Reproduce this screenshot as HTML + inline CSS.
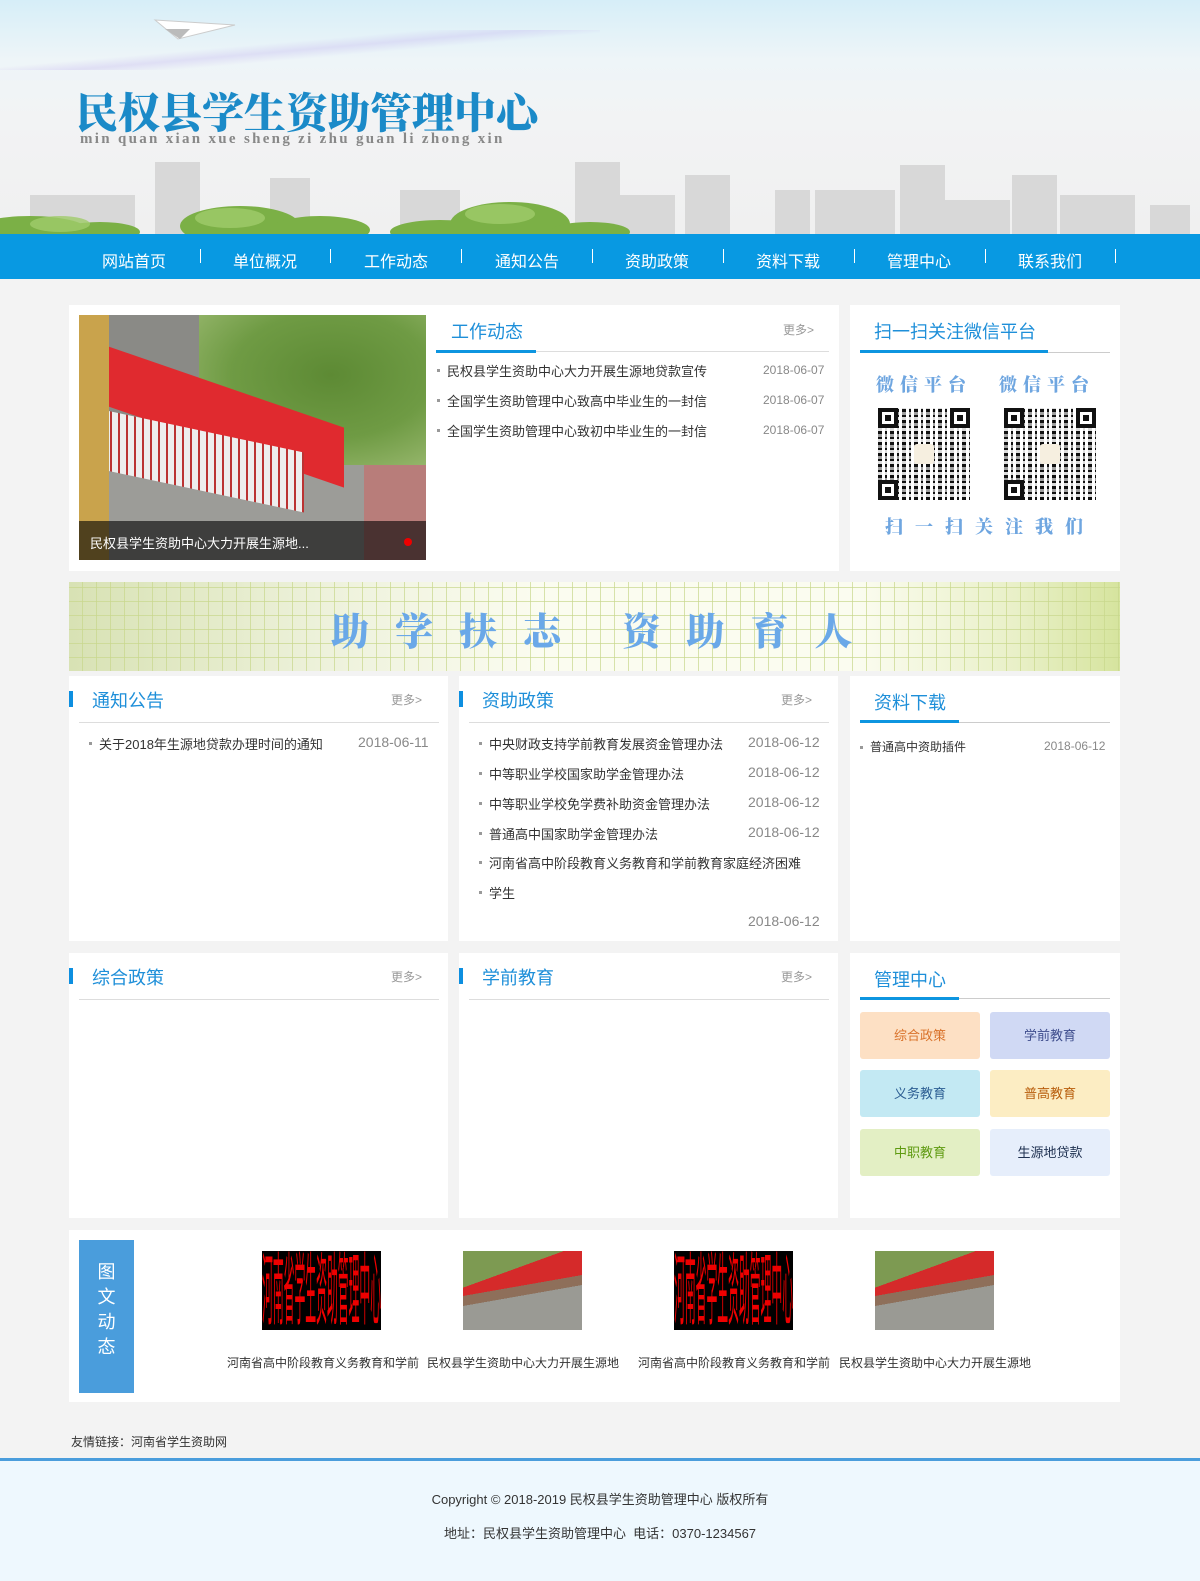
<!DOCTYPE html>
<html><head><meta charset="utf-8"><style>
*{margin:0;padding:0;box-sizing:border-box}
body{width:1200px;height:1581px;background:#f3f3f3;font-family:"Liberation Sans","Noto Sans CJK SC",sans-serif;position:relative;overflow:hidden;color:#333}
.a{position:absolute}
.box{position:absolute;background:#fff}
.hd{position:absolute;font-size:18px;color:#1e8fd9}
.more{position:absolute;font-size:12px;color:#999}
.line{position:absolute;height:1px;background:#ddd}
.uline{position:absolute;height:3px;background:#0d95e0}
.bar{position:absolute;width:4px;height:16px;background:#0d8fe0}
.li{position:absolute;font-size:13px;color:#333;white-space:nowrap}
.li:before{content:"";position:absolute;left:-10px;top:8px;width:3px;height:3px;background:#999}
.dt{position:absolute;font-size:12px;color:#888}
.dt2{position:absolute;font-size:14px;color:#888}
.nav a{position:absolute;top:248px;color:#fff;font-size:16px;text-decoration:none}
.sep{position:absolute;top:249px;width:1px;height:14px;background:#fff}
.btn{position:absolute;width:120px;height:47px;border-radius:3px;font-size:13px;text-align:center;line-height:47px}
.qr{position:absolute;width:92px;height:92px;background:
repeating-linear-gradient(90deg,#111 0 4px,#fff 4px 7px,#111 7px 9px,#fff 9px 12px),#fff}
.qr i{position:absolute;width:20px;height:20px;border:4px solid #111;background:#fff}
.qr i:after{content:"";position:absolute;left:3px;top:3px;width:6px;height:6px;background:#111}
.qr b{position:absolute;left:36px;top:36px;width:20px;height:20px;background:#f6efe0;border-radius:3px}
.qr s{position:absolute;inset:0;background:repeating-linear-gradient(0deg,transparent 0 3px,rgba(255,255,255,.85) 3px 6px,transparent 6px 8px,rgba(255,255,255,.6) 8px 11px)}
.th{position:absolute;width:119px;height:79px;overflow:hidden}
.red{background:#000}
.red span{position:absolute;left:0;top:0;color:#e00;font-size:79px;line-height:79px;white-space:nowrap;transform:scaleX(.137);transform-origin:left top}
.photo{background:linear-gradient(160deg,#7d9a52 0 30%,transparent 30%),linear-gradient(170deg,#d52a2a 0 45%,#8e6f5a 45% 55%,#9a9a94 55%)}
.cap{position:absolute;font-size:12px;color:#333;white-space:nowrap}
</style></head><body>
<!-- header -->
<div class="a" style="left:0;top:0;width:1200px;height:234px;background:linear-gradient(180deg,#d6eef8 0,#eef5f8 60px,#f2f3f4 120px,#f0f0f0 234px)"></div>
<div class="a" style="left:0;top:30px;width:600px;height:40px;background:linear-gradient(175deg,transparent 40%,rgba(200,190,240,.4) 50%,transparent 60%)"></div>
<svg class="a" style="left:150px;top:15px" width="90" height="30"><polygon points="5,5 85,10 28,24" fill="#fff" stroke="#ccc"/><polygon points="15,14 30,24 40,14" fill="#bbb"/></svg>
<div class="a" style="left:76px;top:90px;font-family:'Noto Serif CJK SC',serif;font-weight:900;font-size:42px;line-height:42px;color:#1b8ac8;white-space:nowrap">民权县学生资助管理中心</div>
<div class="a" style="left:80px;top:132px;font-family:'Liberation Serif',serif;font-weight:bold;font-size:15px;line-height:15px;color:#888;letter-spacing:2.3px;white-space:nowrap">min quan xian xue sheng zi zhu guan li zhong xin</div>
<svg class="a" style="left:0;top:150px" width="1200" height="84">
<g fill="#d8d8d8"><rect x="30" y="45" width="40" height="39"/><rect x="70" y="45" width="65" height="39"/><rect x="155" y="12" width="45" height="72"/><rect x="270" y="28" width="40" height="56"/><rect x="400" y="40" width="60" height="44"/><rect x="575" y="12" width="45" height="72"/><rect x="620" y="45" width="55" height="39"/><rect x="685" y="25" width="45" height="59"/><rect x="775" y="40" width="35" height="44"/><rect x="815" y="40" width="80" height="44"/><rect x="900" y="15" width="45" height="69"/><rect x="945" y="50" width="65" height="34"/><rect x="1012" y="25" width="45" height="59"/><rect x="1060" y="45" width="75" height="39"/><rect x="1150" y="55" width="40" height="29"/></g>
<g fill="#7bb046"><ellipse cx="30" cy="82" rx="60" ry="16"/><ellipse cx="100" cy="82" rx="40" ry="10"/><ellipse cx="240" cy="76" rx="60" ry="20"/><ellipse cx="320" cy="80" rx="50" ry="14"/><ellipse cx="440" cy="82" rx="50" ry="12"/><ellipse cx="510" cy="74" rx="60" ry="22"/><ellipse cx="590" cy="82" rx="40" ry="10"/></g>
<g fill="#a0cc6a" opacity=".8"><ellipse cx="230" cy="68" rx="35" ry="10"/><ellipse cx="500" cy="64" rx="35" ry="10"/><ellipse cx="60" cy="74" rx="30" ry="8"/></g>
</svg>
<!-- nav -->
<div class="a" style="left:0;top:234px;width:1200px;height:45px;background:#0899e2"></div>
<div class="nav">
<a style="left:102px">网站首页</a><a style="left:233px">单位概况</a><a style="left:364px">工作动态</a><a style="left:495px">通知公告</a><a style="left:625px">资助政策</a><a style="left:756px">资料下载</a><a style="left:887px">管理中心</a><a style="left:1018px">联系我们</a>
</div>
<div class="sep" style="left:200px"></div><div class="sep" style="left:330px"></div><div class="sep" style="left:461px"></div><div class="sep" style="left:592px"></div><div class="sep" style="left:723px"></div><div class="sep" style="left:854px"></div><div class="sep" style="left:985px"></div><div class="sep" style="left:1115px"></div>

<!-- row1 -->
<div class="box" style="left:69px;top:305px;width:770px;height:266px"></div>
<div class="a" style="left:79px;top:315px;width:347px;height:245px;overflow:hidden;background:#9c9c98">
 <div class="a" style="left:110px;top:0;width:237px;height:150px;background:radial-gradient(ellipse at 60% 40%,#5d8a34,#6f9b44 50%,#a4c07a)"></div>
 <div class="a" style="left:0;top:0;width:120px;height:150px;background:#8a8a86"></div>
 <div class="a" style="left:25px;top:30px;width:240px;height:60px;background:#e02a2f;transform:skewY(19deg);transform-origin:left top"></div>
 <div class="a" style="left:25px;top:95px;width:200px;height:60px;background:repeating-linear-gradient(90deg,#eee 0 6px,#b33 6px 8px);transform:skewY(12deg);transform-origin:left top"></div>
 <div class="a" style="left:0;top:0;width:30px;height:245px;background:#c9a34c"></div>
 <div class="a" style="left:285px;top:150px;width:62px;height:95px;background:#b87d7a"></div>
 <div class="a" style="left:0;top:206px;width:347px;height:39px;background:rgba(0,0,0,.6)"></div>
 <div class="a" style="left:11px;top:218px;color:#fff;font-size:13px">民权县学生资助中心大力开展生源地...</div>
 <div class="a" style="left:325px;top:223px;width:8px;height:8px;border-radius:50%;background:#e00"></div>
</div>
<div class="hd" style="left:451px;top:318px">工作动态</div>
<div class="more" style="left:783px;top:321px">更多&gt;</div>
<div class="line" style="left:436px;top:351px;width:393px"></div>
<div class="uline" style="left:436px;top:350px;width:100px"></div>
<div class="li" style="left:447px;top:361px">民权县学生资助中心大力开展生源地贷款宣传</div><div class="dt" style="left:763px;top:363px">2018-06-07</div>
<div class="li" style="left:447px;top:391px">全国学生资助管理中心致高中毕业生的一封信</div><div class="dt" style="left:763px;top:393px">2018-06-07</div>
<div class="li" style="left:447px;top:421px">全国学生资助管理中心致初中毕业生的一封信</div><div class="dt" style="left:763px;top:423px">2018-06-07</div>

<div class="box" style="left:850px;top:305px;width:270px;height:266px"></div>
<div class="hd" style="left:874px;top:318px">扫一扫关注微信平台</div>
<div class="line" style="left:860px;top:352px;width:250px;background:#ccc"></div>
<div class="uline" style="left:860px;top:350px;width:188px"></div>
<div class="a" style="left:876px;top:371px;font-family:'Noto Serif CJK SC',serif;font-weight:900;font-size:18px;color:#6fa6e0;letter-spacing:6px">微信平台</div>
<div class="a" style="left:999px;top:371px;font-family:'Noto Serif CJK SC',serif;font-weight:900;font-size:18px;color:#6fa6e0;letter-spacing:6px">微信平台</div>
<div class="qr" style="left:878px;top:408px"><s></s><i style="left:0;top:0"></i><i style="right:0;top:0"></i><i style="left:0;bottom:0"></i><b></b></div>
<div class="qr" style="left:1004px;top:408px"><s></s><i style="left:0;top:0"></i><i style="right:0;top:0"></i><i style="left:0;bottom:0"></i><b></b></div>
<div class="a" style="left:885px;top:513px;font-family:'Noto Serif CJK SC',serif;font-weight:900;font-size:18px;color:#6fa6e0;letter-spacing:12px;white-space:nowrap">扫一扫关注我们</div>

<!-- banner -->
<div class="a" style="left:69px;top:582px;width:1051px;height:89px;background:
repeating-linear-gradient(90deg,transparent 0 13px,rgba(200,215,140,.7) 13px 14px),
repeating-linear-gradient(0deg,transparent 0 13px,rgba(200,215,140,.7) 13px 14px),
linear-gradient(90deg,#d8e2b4 0,#eef2dc 25%,#fbfcf0 45%,#fbfcf0 75%,#e9f0c8 90%,#d6e49e 100%)"></div>
<div class="a" style="left:331px;top:601px;font-family:'Noto Serif CJK SC',serif;font-weight:900;font-size:38px;color:#6aa8e8;letter-spacing:26px;white-space:nowrap">助学扶志 资助育人</div>

<!-- row2 -->
<div class="box" style="left:69px;top:676px;width:379px;height:265px"></div>
<div class="bar" style="left:69px;top:691px"></div>
<div class="hd" style="left:92px;top:687px">通知公告</div>
<div class="more" style="left:391px;top:691px">更多&gt;</div>
<div class="line" style="left:79px;top:722px;width:360px"></div>
<div class="li" style="left:99px;top:734px">关于2018年生源地贷款办理时间的通知</div><div class="dt2" style="left:358px;top:734px">2018-06-11</div>

<div class="box" style="left:459px;top:676px;width:379px;height:265px;overflow:hidden">
 <div class="li" style="left:30px;top:262px">普通高中建档立卡家庭经济困难学生免除学杂费政策对</div>
</div>
<div class="bar" style="left:459px;top:691px"></div>
<div class="hd" style="left:482px;top:687px">资助政策</div>
<div class="more" style="left:781px;top:691px">更多&gt;</div>
<div class="line" style="left:469px;top:722px;width:360px"></div>
<div class="li" style="left:489px;top:734px">中央财政支持学前教育发展资金管理办法</div><div class="dt2" style="left:748px;top:734px">2018-06-12</div>
<div class="li" style="left:489px;top:764px">中等职业学校国家助学金管理办法</div><div class="dt2" style="left:748px;top:764px">2018-06-12</div>
<div class="li" style="left:489px;top:794px">中等职业学校免学费补助资金管理办法</div><div class="dt2" style="left:748px;top:794px">2018-06-12</div>
<div class="li" style="left:489px;top:824px">普通高中国家助学金管理办法</div><div class="dt2" style="left:748px;top:824px">2018-06-12</div>
<div class="li" style="left:489px;top:853px">河南省高中阶段教育义务教育和学前教育家庭经济困难</div>
<div class="li" style="left:489px;top:883px">学生</div>
<div class="dt2" style="left:748px;top:913px">2018-06-12</div>

<div class="box" style="left:850px;top:676px;width:270px;height:265px"></div>
<div class="hd" style="left:874px;top:689px">资料下载</div>
<div class="line" style="left:860px;top:722px;width:250px;background:#ccc"></div>
<div class="uline" style="left:860px;top:720px;width:99px"></div>
<div class="li" style="left:870px;top:738px;font-size:12px">普通高中资助插件</div><div class="dt" style="left:1044px;top:739px">2018-06-12</div>

<!-- row3 -->
<div class="box" style="left:69px;top:953px;width:379px;height:265px"></div>
<div class="bar" style="left:69px;top:968px"></div>
<div class="hd" style="left:92px;top:964px">综合政策</div>
<div class="more" style="left:391px;top:968px">更多&gt;</div>
<div class="line" style="left:79px;top:999px;width:360px"></div>
<div class="box" style="left:459px;top:953px;width:379px;height:265px"></div>
<div class="bar" style="left:459px;top:968px"></div>
<div class="hd" style="left:482px;top:964px">学前教育</div>
<div class="more" style="left:781px;top:968px">更多&gt;</div>
<div class="line" style="left:469px;top:999px;width:360px"></div>
<div class="box" style="left:850px;top:953px;width:270px;height:265px"></div>
<div class="hd" style="left:874px;top:966px">管理中心</div>
<div class="line" style="left:860px;top:998px;width:250px;background:#ccc"></div>
<div class="uline" style="left:860px;top:997px;width:99px"></div>
<div class="btn" style="left:860px;top:1012px;background:#fde0c4;color:#d9722a">综合政策</div>
<div class="btn" style="left:990px;top:1012px;background:#d0d9f4;color:#3d4c8c">学前教育</div>
<div class="btn" style="left:860px;top:1070px;background:#c3e9f3;color:#2b5d92">义务教育</div>
<div class="btn" style="left:990px;top:1070px;background:#fcedc3;color:#b85d0b">普高教育</div>
<div class="btn" style="left:860px;top:1129px;background:#e3efc4;color:#5e9a10">中职教育</div>
<div class="btn" style="left:990px;top:1129px;background:#e6eefb;color:#1e3050">生源地贷款</div>

<!-- gallery -->
<div class="box" style="left:69px;top:1230px;width:1051px;height:172px"></div>
<div class="a" style="left:79px;top:1240px;width:55px;height:153px;background:#4a9ddc;color:#fff;font-size:18px;line-height:25px;text-align:center;padding-top:20px">图<br>文<br>动<br>态</div>
<div class="th red" style="left:262px;top:1251px"><span>河南省学生资助管理中心</span></div>
<div class="th photo" style="left:463px;top:1251px"></div>
<div class="th red" style="left:674px;top:1251px"><span>河南省学生资助管理中心</span></div>
<div class="th photo" style="left:875px;top:1251px"></div>
<div class="cap" style="left:227px;top:1354px">河南省高中阶段教育义务教育和学前</div>
<div class="cap" style="left:427px;top:1354px">民权县学生资助中心大力开展生源地</div>
<div class="cap" style="left:638px;top:1354px">河南省高中阶段教育义务教育和学前</div>
<div class="cap" style="left:839px;top:1354px">民权县学生资助中心大力开展生源地</div>

<div class="a" style="left:71px;top:1433px;font-size:12px;color:#333">友情链接：河南省学生资助网</div>
<div class="a" style="left:0;top:1458px;width:1200px;height:3px;background:#4a9ddc"></div>
<div class="a" style="left:0;top:1461px;width:1200px;height:120px;background:#eef8fe"></div>
<div class="a" style="left:0;top:1489px;width:1200px;text-align:center;font-size:13px;color:#333">Copyright © 2018-2019 民权县学生资助管理中心 版权所有</div>
<div class="a" style="left:0;top:1523px;width:1200px;text-align:center;font-size:13px;color:#333">地址：民权县学生资助管理中心 &nbsp;电话：0370-1234567</div>
</body></html>
